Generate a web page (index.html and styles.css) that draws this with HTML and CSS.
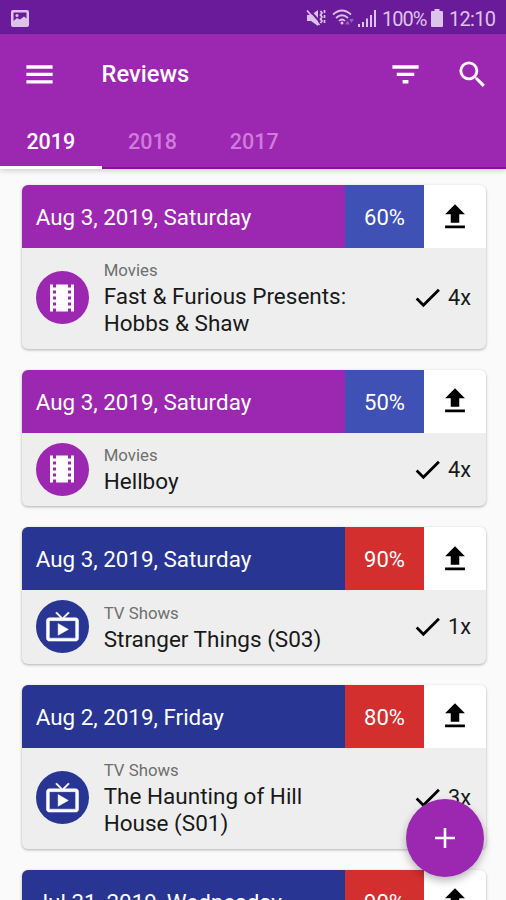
FILE: index.html
```
<!DOCTYPE html>
<html lang="en">
<head>
<meta charset="utf-8">
<title>Reviews</title>
<link rel="stylesheet" href="styles.css">
</head>
<body>
<svg class="defs" aria-hidden="true">
  <symbol id="upload" viewBox="0 0 24 24"><path d="M9 16v-6H5l7-7 7 7h-4v6zM5 18h14v2H5z"/></symbol>
  <symbol id="check" viewBox="0 0 24 24"><path d="M9 16.17L4.83 12l-1.42 1.41L9 19 21 7l-1.41-1.41z"/></symbol>
  <symbol id="film" viewBox="0 0 24 24"><path d="M18 3v2h-2V3H8v2H6V3H4v18h2v-2h2v2h8v-2h2v2h2V3h-2zM8 17H6v-2h2v2zm0-4H6v-2h2v2zm0-4H6V7h2v2zm10 8h-2v-2h2v2zm0-4h-2v-2h2v2zm0-4h-2V7h2v2z"/></symbol>
  <symbol id="tv" viewBox="0 0 24 24"><path d="M21 6h-7.59l3.29-3.29L16 2l-4 4-4-4-.71.71L10.59 6H3c-1.1 0-2 .89-2 2v12c0 1.1.9 2 2 2h18c1.1 0 2-.9 2-2V8c0-1.110-.9-2-2-2zm0 14H3V8h18v12zM9 10v8l7-4z"/></symbol>
</svg>
<div class="screen">
  <div class="status">
    <svg class="pic" viewBox="0 0 18 17"><path fill-rule="evenodd" d="M2 0h14a2 2 0 0 1 2 2v13a2 2 0 0 1-2 2H2a2 2 0 0 1-2-2V2a2 2 0 0 1 2-2zM2.500 2.500V11l3.500-3 3 1.500 4-3 2.500 2V2.500z"/><circle cx="6" cy="5.500" r="1.500"/></svg>
    <div class="status-right">
      <svg class="mute" viewBox="0 0 20 18"><path d="M1 6h4l7-5v16l-7-5H1z"/><path class="cut" d="M2.500 0L15 14"/><path class="line" d="M1 1.500L13.500 16M14.500 2l1.500 2-1.500 2 1.500 2-1.500 2 1.500 2-1.500 2M18.500 1v3M18.500 6v3M18.500 11v3"/></svg>
      <svg class="wifi" viewBox="0 0 22 18"><path class="line" d="M1 5.500q9-8 18 0M4 9q6-5.500 12 0M7 12q3-3 6 0"/><circle cx="10" cy="14" r="1.500"/><path class="dim" d="M13 15.500l2.500-4 2.500 4zM17 10l2.500 4 2.500-4z"/></svg>
      <svg class="signal" viewBox="0 0 18 17"><path d="M0 14h2v3H0zM4 12h2v5H4zM8 8.500h2V17H8zM12 5h2v12h-2zM16 0h2v17h-2z"/></svg>
      <span class="pct">100%</span>
      <svg class="battery" viewBox="0 0 12 18"><path d="M3.500 0h5v2H11a1 1 0 0 1 1 1v14a1 1 0 0 1-1 1H1a1 1 0 0 1-1-1V3a1 1 0 0 1 1-1h2.500z"/></svg>
      <span class="clock">12:10</span>
    </div>
  </div>
  <header class="appbar">
    <div class="toolbar">
      <svg class="icon" viewBox="0 0 24 24"><path d="M3 18.200h18v-2.300H3zM3 13.100h18v-2.300H3zM3 5.700v2.300h18V5.700z"/></svg>
      <h1>Reviews</h1>
      <svg class="icon" viewBox="0 0 24 24"><path d="M10 18.100h4v-2.300h-4zM3 5.700v2.300h18V5.700zM6 13.100h12v-2.300H6z"/></svg>
      <svg class="icon search" viewBox="0 0 24 24"><path d="M15.500 14h-.79l-.28-.27A6.470 6.470 0 0 0 16 9.500 6.500 6.500 0 1 0 9.500 16c1.610 0 3.090-.59 4.230-1.570l.27.28v.79l5 4.990L20.490 19l-4.990-5zm-6 0C7.010 14 5 11.990 5 9.500S7.010 5 9.500 5 14 7.010 14 9.500 11.990 14 9.500 14z"/></svg>
    </div>
    <nav class="tabs"><span class="tab active">2019</span><span class="tab">2018</span><span class="tab">2017</span></nav>
  </header>
  <main class="list">
    <article class="card movie tall">
      <div class="head"><span class="date">Aug 3, 2019, Saturday</span><span class="score">60%</span><span class="share"><svg><use href="#upload"/></svg></span></div>
      <div class="body"><span class="avatar"><svg><use href="#film"/></svg></span><div class="text"><div class="kind">Movies</div><div class="title">Fast &amp; Furious Presents: Hobbs &amp; Shaw</div></div><svg class="check"><use href="#check"/></svg><span class="count">4x</span></div>
    </article>
    <article class="card movie">
      <div class="head"><span class="date">Aug 3, 2019, Saturday</span><span class="score">50%</span><span class="share"><svg><use href="#upload"/></svg></span></div>
      <div class="body"><span class="avatar"><svg><use href="#film"/></svg></span><div class="text"><div class="kind">Movies</div><div class="title">Hellboy</div></div><svg class="check"><use href="#check"/></svg><span class="count">4x</span></div>
    </article>
    <article class="card show">
      <div class="head"><span class="date">Aug 3, 2019, Saturday</span><span class="score">90%</span><span class="share"><svg><use href="#upload"/></svg></span></div>
      <div class="body"><span class="avatar"><svg><use href="#tv"/></svg></span><div class="text"><div class="kind">TV Shows</div><div class="title">Stranger Things (S03)</div></div><svg class="check"><use href="#check"/></svg><span class="count">1x</span></div>
    </article>
    <article class="card show tall">
      <div class="head"><span class="date">Aug 2, 2019, Friday</span><span class="score">80%</span><span class="share"><svg><use href="#upload"/></svg></span></div>
      <div class="body"><span class="avatar"><svg><use href="#tv"/></svg></span><div class="text"><div class="kind">TV Shows</div><div class="title">The Haunting of Hill House (S01)</div></div><svg class="check"><use href="#check"/></svg><span class="count">3x</span></div>
    </article>
    <article class="card show">
      <div class="head"><span class="date">Jul 31, 2019, Wednesday</span><span class="score">90%</span><span class="share"><svg><use href="#upload"/></svg></span></div>
    </article>
  </main>
  <button class="fab" aria-label="Add"><svg viewBox="0 0 20 20"><path d="M8.700 0h2.600v8.700H20v2.600h-8.700V20H8.700v-8.700H0V8.700h8.700z"/></svg></button>
</div>
</body>
</html>
```

FILE: styles.css
```
* { box-sizing: border-box; }
body { margin: 0; font-family: Roboto, "Liberation Sans", sans-serif; background: #fafafa; }
svg { display: block; flex: none; fill: currentColor; }
.defs { position: absolute; width: 0; height: 0; }
.screen { position: relative; width: 506px; height: 900px; overflow: hidden; }

.status { display: flex; align-items: center; justify-content: space-between; height: 34px; padding: 2px 11px 0 11px; background: #6a1b9a; color: #dcc3ea; font-size: 20px; }
.status-right { display: flex; align-items: center; }
.line { fill: none; stroke: currentColor; stroke-width: 1.7; }
.cut { fill: none; stroke: #6a1b9a; stroke-width: 2; }
.dim { opacity: .4; }
.pic { width: 18px; height: 17px; }
.mute { width: 20px; height: 18px; margin-right: 6px; }
.wifi { width: 22px; height: 18px; margin-right: 4px; }
.signal { width: 18px; height: 17px; margin-right: 6px; }
.battery { width: 12px; height: 18px; margin: 0 6px; }
.pct { width: 43px; white-space: nowrap; letter-spacing: -1px; padding-top: 1px; }
.clock { width: 46px; white-space: nowrap; letter-spacing: -.7px; padding-top: 1px; }

.appbar { position: relative; height: 135px; background: #9c27b0; color: #fff; border-bottom: 2px solid #8a0f9f; box-shadow: 0 2px 5px rgba(0,0,0,.16); }
.toolbar { display: flex; align-items: center; height: 80px; padding: 0 16px 0 22px; }
.icon { width: 35px; height: 35px; }
.search { margin-left: 32px; }
h1 { flex: 1; margin: 0 0 0 44.500px; font-size: 23.700px; font-weight: 500; line-height: 27px; padding-top: 1px; }
.tabs { display: flex; height: 55px; }
.tab { width: 101.700px; text-align: center; line-height: 56px; font-size: 21.500px; font-weight: 500; color: #d07bdc; }
.tab.active { color: #fff; border-bottom: 3px solid #fff; }

.list { display: flex; flex-direction: column; gap: 21px; padding: 16px 20px 0 21.700px; }
.card { flex: none; height: 136.500px; border-radius: 6px; background: #eee; overflow: hidden; box-shadow: 0 1px 3px rgba(0,0,0,.3); }
.tall { height: 163.800px; }
.head { display: flex; height: 63px; color: #fff; font-size: 22.400px; line-height: 65px; }
.date { flex: 1; padding-left: 14px; }
.movie .date, .movie .avatar { background: #9c27b0; }
.show .date, .show .avatar { background: #283593; }
.score { width: 79px; text-align: center; font-size: 22px; }
.movie .score { background: #3f51b5; }
.show .score { background: #d32f2f; }
.share { display: flex; align-items: center; justify-content: center; width: 62px; background: #fff; color: #000; }
.share svg { width: 34px; height: 34px; }
.body { display: flex; align-items: center; height: calc(100% - 63px); padding: 0 15px 1px 14px; color: #191919; }
.avatar { display: flex; align-items: center; justify-content: center; flex: none; width: 53px; height: 53px; border-radius: 50%; color: #fff; }
.avatar svg { width: 36px; height: 36px; }
.show .avatar svg { width: 35px; height: 35px; stroke: currentColor; stroke-width: .35; }
.text { width: 260px; margin-left: 15px; margin-right: auto; padding-top: 2px; }
.kind { font-size: 16.800px; line-height: 20px; color: #6f6f6f; }
.title { font-size: 22.500px; line-height: 27px; padding-top: 3px; }
.check { width: 33px; height: 33px; color: #000; }
.count { width: 24px; margin-left: 3px; font-size: 21.700px; text-align: right; white-space: nowrap; }

.fab { position: absolute; left: 406px; top: 799px; width: 78px; height: 78px; display: flex; align-items: center; justify-content: center; padding: 0; border: 0; border-radius: 50%; background: #9c27b0; color: #fff; box-shadow: 0 4px 8px rgba(0,0,0,.28); }
.fab svg { width: 20px; height: 20px; }
```
